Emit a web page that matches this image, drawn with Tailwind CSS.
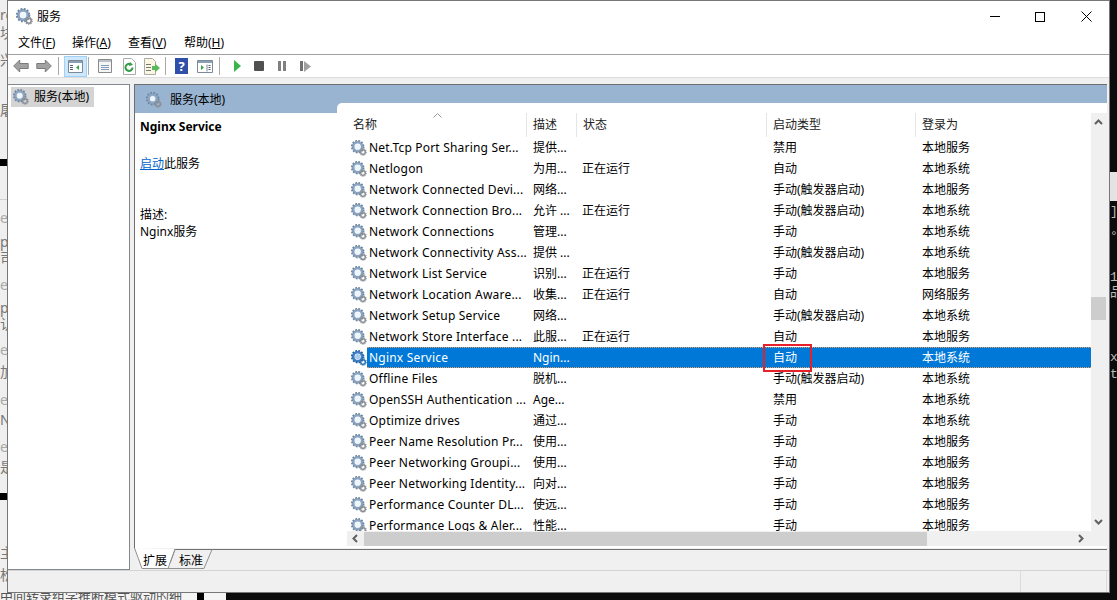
<!DOCTYPE html>
<html lang="zh-CN">
<head>
  <meta charset="UTF-8" />
  <title>服务</title>
  <script src="https://cdn.jsdelivr.net/npm/@tailwindcss/browser@4"></script>
</head>
<body class="h-[600px] w-[1117px] overflow-hidden bg-black text-[12px] leading-none text-black font-['Noto_Sans','Noto_Sans_CJK_SC',sans-serif]">
  <!-- gear icons used everywhere -->
  <svg class="hidden">
    <symbol id="gear" viewBox="0 0 18 18">
      <circle cx="7.500" cy="7.500" r="5" fill="none" stroke="#8ba6c4" stroke-width="3" />
      <circle cx="7.500" cy="7.500" r="6.700" fill="none" stroke="#6d8299" stroke-width="1.800" stroke-dasharray="2 1.500" />
      <circle cx="7.500" cy="7.500" r="3" fill="#eef5fb" />
      <circle cx="13.500" cy="13.500" r="2.600" fill="none" stroke="#8a8f96" stroke-width="1.700" />
      <circle cx="13.500" cy="13.500" r="3.800" fill="none" stroke="#8a8f96" stroke-width="1.100" stroke-dasharray="1.400 1.200" />
    </symbol>
    <symbol id="gear-selected" viewBox="0 0 18 18">
      <circle cx="7.500" cy="7.500" r="5" fill="none" stroke="#3f7fc4" stroke-width="3" />
      <circle cx="7.500" cy="7.500" r="6.700" fill="none" stroke="#1f5f9f" stroke-width="1.800" stroke-dasharray="2 1.500" />
      <circle cx="7.500" cy="7.500" r="3" fill="#a9cdf0" />
      <circle cx="13.500" cy="13.500" r="2.600" fill="none" stroke="#2f6fb0" stroke-width="1.700" />
      <circle cx="13.500" cy="13.500" r="3.800" fill="none" stroke="#2f6fb0" stroke-width="1.100" stroke-dasharray="1.400 1.200" />
    </symbol>
  </svg>

  <div class="flex h-[593px]">
    <!-- desktop behind, left edge -->
    <div class="flex w-[7px] shrink-0 flex-col overflow-hidden bg-[#efefef] text-[14px] text-[#777]">
      <div class="h-[159px] pt-[8px]"><p>re</p><p class="mt-[4px]">块</p><p class="mt-[13px]">兴</p><p class="mt-[36px]">屠</p></div>
      <div class="h-[7px] shrink-0 bg-black"></div>
      <div class="h-[327px] shrink-0">
        <div class="h-[34px] border-b border-[#d0d0d0]"></div>
        <p class="mt-[11px] text-[#aaa]">er</p><p class="mt-[10px]">p</p><p class="mt-[2px]">司</p>
        <p class="mt-[13px] text-[#aaa]">er</p><p class="mt-[9px]">p</p><p class="mt-[2px]">认</p>
        <p class="mt-[12px] text-[#aaa]">er</p><p class="mt-[8px]">加</p>
        <p class="mt-[14px] text-[#aaa]">er</p><p class="mt-[6px]">N</p>
        <p class="mt-[13px] text-[#aaa]">er</p><p class="mt-[6px]">是</p>
      </div>
      <div class="h-[7px] shrink-0 bg-black"></div>
      <div class="flex-1 pt-[46px]"><p>主</p><p class="mt-[8px]">松</p></div>
    </div>

    <!-- services window -->
    <div class="flex w-[1103px] shrink-0 flex-col border border-[#777] bg-[#f0f0f0]">
      <div class="flex h-[31px] shrink-0 items-center bg-white pl-[8px]">
        <svg class="h-[17px] w-[17px]"><use href="#gear" /></svg>
        <span class="ml-[4px]">服务</span>
        <div class="ml-auto flex items-center">
          <div class="flex h-[31px] w-[46px] items-center justify-center pl-[2px]"><div class="h-px w-[10px] bg-black"></div></div>
          <div class="flex h-[31px] w-[46px] items-center justify-center"><div class="h-[10px] w-[10px] border border-black"></div></div>
          <div class="flex h-[31px] w-[46px] items-center justify-center">
            <svg class="h-[11px] w-[11px]" viewBox="0 0 11 11"><path d="M.5.5l10 10M10.500.5l-10 10" stroke="#000" fill="none" /></svg>
          </div>
        </div>
      </div>
      <div class="flex h-[23px] shrink-0 items-center border-b border-[#a0a0a0] bg-white pl-[10px] whitespace-nowrap">
        <span class="w-[54px]">文件(<u>F</u>)</span><span class="w-[56px]">操作(<u>A</u>)</span><span class="w-[56px]">查看(<u>V</u>)</span><span>帮助(<u>H</u>)</span>
      </div>
      <!-- toolbar -->
      <div class="flex h-[23px] shrink-0 items-center border-b border-[#dcdcdc] bg-white pl-[5px]">
        <svg class="h-[14px] w-[16px]" viewBox="0 0 16 14"><path d="M.7 7l6-6v3.500h8.500v5H6.700V13z" fill="#a2a2a2" stroke="#7a7a7a" /></svg>
        <svg class="ml-[7px] h-[14px] w-[16px]" viewBox="0 0 16 14"><path d="M15.300 7l-6-6v3.500H.8v5h8.500V13z" fill="#a2a2a2" stroke="#7a7a7a" /></svg>
        <div class="ml-[6px] h-[18px] w-px bg-[#aaa]"></div>
        <div class="ml-[5px] flex h-[21px] w-[23px] items-center justify-center border border-[#9fd0f5] bg-[#cfe7fa]">
          <svg class="h-[15px] w-[15px]" viewBox="0 0 15 15"><path d="M.5 1.500h14v12H.500z" fill="#fff" stroke="#7a8a99" /><path d="M1 2h13v2H1z" fill="#8aa0b5" /><path d="M2 6h3v1H2zM2 8h3v1H2zM2 10h3v1H2z" fill="#506070" /><path d="M11 6v5L8 8.500z" fill="#35a845" /></svg>
        </div>
        <div class="ml-[1px] h-[18px] w-px bg-[#aaa]"></div>
        <svg class="ml-[8px] h-[16px] w-[16px]" viewBox="0 0 16 16"><path d="M1.500 1.500h13v13h-13z" fill="#f4f4f4" stroke="#8a8a8a" /><path d="M2 2h12v2H2z" fill="#b8c0c8" /><path d="M4 7h8v1H4zM4 9h8v1H4zM4 11h8v1H4z" fill="#7f9cbc" /></svg>
        <svg class="ml-[9px] h-[17px] w-[15px]" viewBox="0 0 15 17"><path d="M1.500.5h8l4 4v12h-12z" fill="#fff" stroke="#aaa" /><path d="M10.500 9.500a3.500 3.500 0 1 1-1.500-3" fill="none" stroke="#2f9e44" stroke-width="2" /><path d="M8 4l3 3-4 1z" fill="#2f9e44" /></svg>
        <svg class="ml-[6px] h-[17px] w-[17px]" viewBox="0 0 17 17"><path d="M1.500.5h8l3 3v13h-11z" fill="#fbf6df" stroke="#aaa" /><path d="M3 6h5v1H3zM3 9h5v1H3zM3 12h5v1H3z" fill="#777" /><path d="M9 8h3V5.500l5 4.500-5 4.500V12H9z" fill="#5cb85c" /></svg>
        <div class="ml-[5px] h-[18px] w-px bg-[#aaa]"></div>
        <div class="ml-[9px] flex h-[16px] w-[13px] items-center justify-center bg-[#2f4fa8] text-[13px] font-bold text-white">?</div>
        <svg class="ml-[9px] h-[15px] w-[16px]" viewBox="0 0 16 15"><path d="M.5 1.500h15v12H.500z" fill="#fff" stroke="#7a8a99" /><path d="M1 2h14v2H1z" fill="#8aa0b5" /><path d="M10 5.500v7" stroke="#7a8a99" /><path d="M4 6v5l3-2.500z" fill="#35a845" /><path d="M11.500 6h2v1h-2zM11.500 8h2v1h-2zM11.500 10h2v1h-2z" fill="#506070" /></svg>
        <div class="ml-[6px] h-[18px] w-px bg-[#aaa]"></div>
        <svg class="ml-[14px] h-[12px] w-[7px]" viewBox="0 0 7 12"><path d="M0 0l7 6-7 6z" fill="#39b54a" /></svg>
        <div class="ml-[13px] h-[10px] w-[10px] rounded-[1px] bg-[#505050]"></div>
        <div class="ml-[14px] flex gap-[2px]"><div class="h-[10px] w-[3px] bg-[#808080]"></div><div class="h-[10px] w-[3px] bg-[#808080]"></div></div>
        <div class="ml-[14px] flex items-center gap-[1px]"><div class="h-[10px] w-[3px] bg-[#707070]"></div><svg class="h-[11px] w-[7px]" viewBox="0 0 7 11"><path d="M0 0l7 5.500L0 11z" fill="#a0a0a0" /></svg></div>
      </div>

      <!-- panes -->
      <div class="flex min-h-0 flex-1 pt-[6px]">
        <div class="h-[486px] w-[122px] shrink-0 border border-l-0 border-[#828790] bg-white pl-[3px] pt-[2px]">
          <div class="flex h-[20px] w-[83px] items-center bg-[#d4d4d4] pl-[2px]">
            <svg class="h-[16px] w-[16px]"><use href="#gear" /></svg>
            <span class="ml-[5px]">服务(本地)</span>
          </div>
        </div>
        <div class="ml-[4px] mr-[2px] flex min-w-0 flex-1 flex-col">
          <div class="flex h-[464px] border-l border-t border-[#6e6e6e] bg-[#99b4d1]">
            <!-- description panel -->
            <div class="flex w-[202px] shrink-0 flex-col">
              <div class="flex h-[28px] shrink-0 items-center pl-[11px] pt-[2px]">
                <svg class="h-[16px] w-[16px]"><use href="#gear" /></svg>
                <span class="ml-[8px]">服务(本地)</span>
              </div>
              <div class="flex-1 bg-white pl-[5px] pt-[8px]">
                <p class="font-bold">Nginx Service</p>
                <p class="mt-[25px]"><span class="text-[#0066cc] underline">启动</span>此服务</p>
                <p class="mt-[39px]">描述:</p>
                <p class="mt-[5px]">Nginx服务</p>
              </div>
            </div>
            <!-- list -->
            <div class="mt-[18px] flex min-w-0 flex-1 flex-col rounded-tl-[5px] bg-white">
              <div class="flex h-[428px] shrink-0">
                <div class="min-w-0 flex-1">
                  <div class="relative flex h-[34px] pl-[10px] pt-[10px] text-[#222]">
                    <div class="flex h-[24px] w-[180px] items-center border-r border-[#e5e5e5] pl-[6px]">名称</div>
                    <div class="flex h-[24px] w-[50px] items-center border-r border-[#e5e5e5] pl-[6px]">描述</div>
                    <div class="flex h-[24px] w-[190px] items-center border-r border-[#e5e5e5] pl-[6px]">状态</div>
                    <div class="flex h-[24px] w-[149px] items-center border-r border-[#e5e5e5] pl-[6px]">启动类型</div>
                    <div class="flex h-[24px] items-center pl-[6px]">登录为</div>
                    <svg class="absolute left-[96px] top-[10px] h-[5px] w-[9px]" viewBox="0 0 9 5"><path d="M.5 4.500l4-4 4 4" fill="none" stroke="#999" /></svg>
                  </div>
                  <div id="rows" class="h-[394px] overflow-hidden"></div>
                </div>
                <!-- vertical scrollbar -->
                <div class="relative mt-[10px] w-[16px] shrink-0 bg-[#f0f0f0]">
                  <svg class="absolute left-[3px] top-[6px] h-[6px] w-[9px]" viewBox="0 0 9 6"><path d="M1 5l3.500-3.500L8 5" fill="none" stroke="#606060" stroke-width="2" /></svg>
                  <div class="absolute left-0 top-[184px] h-[23px] w-[15px] bg-[#cdcdcd]"></div>
                  <svg class="absolute bottom-[6px] left-[3px] h-[6px] w-[9px]" viewBox="0 0 9 6"><path d="M1 1l3.500 3.500L8 1" fill="none" stroke="#606060" stroke-width="2" /></svg>
                </div>
              </div>
              <!-- horizontal scrollbar -->
              <div class="flex h-[15px] shrink-0 items-center bg-white">
                <div class="ml-[10px] flex h-[15px] flex-1 items-center bg-[#f0f0f0] pl-[5px]">
                  <svg class="h-[9px] w-[6px]" viewBox="0 0 6 9"><path d="M5 1L1.500 4.500 5 8" fill="none" stroke="#606060" stroke-width="2" /></svg>
                  <div class="ml-[6px] h-[14px] w-[563px] bg-[#cdcdcd]"></div>
                  <svg class="ml-[151px] h-[9px] w-[6px]" viewBox="0 0 6 9"><path d="M1 1l3.500 3.500L1 8" fill="none" stroke="#606060" stroke-width="2" /></svg>
                </div>
              </div>
            </div>
          </div>
          <!-- tabs -->
          <div class="relative h-[22px]">
            <svg class="absolute left-0 top-0 h-[22px] w-[973px]" viewBox="0 0 973 22" fill="none">
              <path d="M40 1.500H973" stroke="#707070" />
              <path d="M0.500 0L8 20.500H34L41 1.500" fill="#fff" stroke="#909090" />
              <path d="M34 20.500H70L78 1.500M41 1.500L36 15" stroke="#909090" />
            </svg>
            <div class="absolute left-[9px] top-[7px]">扩展</div>
            <div class="absolute left-[45px] top-[7px]">标准</div>
          </div>
        </div>
      </div>

      <!-- status bar -->
      <div class="flex h-[22px] shrink-0 justify-end border-t border-[#d4d4d4] pr-[2px]">
        <div class="w-[87px] border-x border-[#dcdcdc]"></div>
      </div>
    </div>

    <!-- desktop behind, right edge -->
    <div class="flex flex-1 flex-col overflow-hidden bg-[#0c0c0c] font-['Liberation_Mono','Noto_Sans_CJK_SC',monospace] text-[13px] text-[#bbb]">
      <div class="h-[172px] shrink-0"></div>
      <div class="h-[29px] shrink-0 bg-[#e4e4e4]"></div>
      <p class="mt-[4px]">]</p><p class="mt-[12px]">°</p><p class="mt-[28px]">1</p><p class="mt-[2px]">品</p><p class="mt-[52px]">x</p><p class="mt-[4px]">t</p>
    </div>
  </div>

  <!-- desktop behind, bottom edge -->
  <div class="flex h-[7px] overflow-hidden">
    <div class="w-[197px] overflow-hidden bg-[#f4f4f4] text-[13px] text-[#555]"><span class="relative top-[-3px] block whitespace-nowrap">中间转录组学推断模式驱动的细</span></div>
    <div class="w-[7px] bg-black"></div>
    <div class="w-[22px] bg-[#f4f4f4]"></div>
    <div class="flex-1 bg-[#0c0c0c]"></div>
  </div>

  <script>
    // 服务列表:名称, 描述, 状态, 启动类型, 登录为
    const services = [
      ['Net.Tcp Port Sharing Ser...', '提供...', '', '禁用', '本地服务'],
      ['Netlogon', '为用...', '正在运行', '自动', '本地系统'],
      ['Network Connected Devi...', '网络...', '', '手动(触发器启动)', '本地服务'],
      ['Network Connection Bro...', '允许 ...', '正在运行', '手动(触发器启动)', '本地系统'],
      ['Network Connections', '管理...', '', '手动', '本地系统'],
      ['Network Connectivity Ass...', '提供 ...', '', '手动(触发器启动)', '本地系统'],
      ['Network List Service', '识别...', '正在运行', '手动', '本地服务'],
      ['Network Location Aware...', '收集...', '正在运行', '自动', '网络服务'],
      ['Network Setup Service', '网络...', '', '手动(触发器启动)', '本地系统'],
      ['Network Store Interface ...', '此服...', '正在运行', '自动', '本地服务'],
      ['Nginx Service', 'Ngin...', '', '自动', '本地系统'],
      ['Offline Files', '脱机...', '', '手动(触发器启动)', '本地系统'],
      ['OpenSSH Authentication ...', 'Age...', '', '禁用', '本地系统'],
      ['Optimize drives', '通过...', '', '手动', '本地系统'],
      ['Peer Name Resolution Pr...', '使用...', '', '手动', '本地服务'],
      ['Peer Networking Groupi...', '使用...', '', '手动', '本地服务'],
      ['Peer Networking Identity...', '向对...', '', '手动', '本地服务'],
      ['Performance Counter DL...', '使远...', '', '手动', '本地服务'],
      ['Performance Logs & Aler...', '性能...', '', '手动', '本地服务'],
    ];

    document.getElementById('rows').innerHTML = services.map(s => {
      const selected = s[0] === 'Nginx Service';
      const rowClass = selected ? 'bg-[#0078d7] text-white border-y border-dotted border-[#e8a060]' : '';
      const box = selected ? '<div class="absolute left-[426px] top-[-3px] h-[28px] w-[49px] border-2 border-[#e8202a]"></div>' : '';
      const icon = selected ? '#gear-selected' : '#gear';
      return `<div class="relative flex h-[21px] items-center pl-[14px]">
        <svg class="h-[16px] w-[16px] shrink-0"><use href="${icon}" /></svg>
        <div class="flex h-[21px] flex-1 items-center pl-[2px] ${rowClass}">
          <span class="w-[164px] whitespace-nowrap tracking-[0.2px]">${s[0].replace('&', '&amp;')}</span>
          <span class="w-[49px] whitespace-nowrap">${s[1]}</span>
          <span class="w-[191px]">${s[2]}</span>
          <span class="w-[149px]">${s[3]}</span>
          <span>${s[4]}</span>
        </div>
        ${box}
      </div>`;
    }).join('');
  </script>
</body>
</html>
